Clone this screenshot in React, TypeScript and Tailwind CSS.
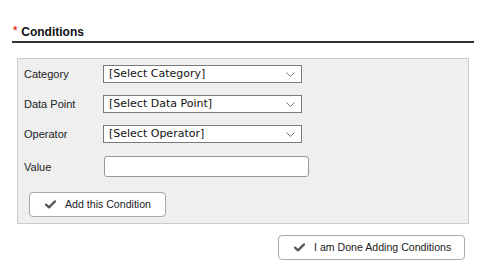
import type React from 'react';

const CheckIcon: React.FC = () => (
  <svg width="11" height="9" viewBox="0 0 11 9" className="shrink-0">
    <path d="M1 4.6 L4 7.4 L10 1.4" fill="none" stroke="#555" strokeWidth="2.2" strokeLinecap="round" strokeLinejoin="round" />
  </svg>
);

const Chevron: React.FC = () => (
  <svg width="9" height="5" viewBox="0 0 9 5" className="shrink-0">
    <path d="M0.5 0.5 L4.5 4.5 L8.5 0.5" fill="none" stroke="#777" strokeWidth="1" />
  </svg>
);

function SelectRow({ label, placeholder }: { label: string; placeholder: string }) {
  return (
    <div className="flex items-center h-[18px]">
      <span className="w-[79px] text-[11px] leading-[14px] text-[#222]">{label}</span>
      <div className="flex items-center justify-between w-[199px] h-[18px] border border-[#7a7a7a] bg-white pl-[5px] pr-[6px]">
        <span className="text-[11px] leading-[14px] text-[#111] font-['DejaVu_Sans',Verdana,sans-serif]">{placeholder}</span>
        <Chevron />
      </div>
    </div>
  );
}

export default function App() {
  return (
    <div className="w-[485px] h-[275px] bg-white pt-[23px] pl-[12px] pr-[11px] font-['Liberation_Sans',Arial,sans-serif]">
      <div className="flex items-center gap-[4px] h-[17px] pl-[1px] border-b-2 border-[#333] pb-[1px] box-content">
        <span className="text-[#e03a1a] text-[11px] font-bold leading-none mt-[-2px]">*</span>
        <h2 className="text-[12px] font-bold text-[#111]">Conditions</h2>
      </div>

      <div className="mx-[5px] mt-[15px] h-[166px] border border-[#cccccc] bg-[#efefef] pt-[6px] pl-[6px]">
        <div className="flex flex-col gap-[12px]">
          <SelectRow label="Category" placeholder="[Select Category]" />
          <SelectRow label="Data Point" placeholder="[Select Data Point]" />
          <SelectRow label="Operator" placeholder="[Select Operator]" />
        </div>
        <div className="flex items-center mt-[13px] h-[21px]">
          <span className="w-[80px] text-[11px] leading-[14px] text-[#222]">Value</span>
          <input className="w-[205px] h-[21px] rounded-[3px] border border-[#999] bg-white outline-none" />
        </div>
        <button className="mt-[15px] ml-[5px] flex items-center gap-[9px] w-[137px] h-[25px] pl-[15px] rounded-[4px] border border-[#aaa] bg-white text-[10.6px] text-[#222]">
          <CheckIcon />
          Add this Condition
        </button>
      </div>

      <div className="flex justify-end pr-[9px] mt-[11px]">
        <button className="flex items-center gap-[9px] w-[187px] h-[25px] pl-[15px] rounded-[4px] border border-[#aaa] bg-white text-[10.6px] text-[#222]">
          <CheckIcon />
          I am Done Adding Conditions
        </button>
      </div>
    </div>
  );
}
